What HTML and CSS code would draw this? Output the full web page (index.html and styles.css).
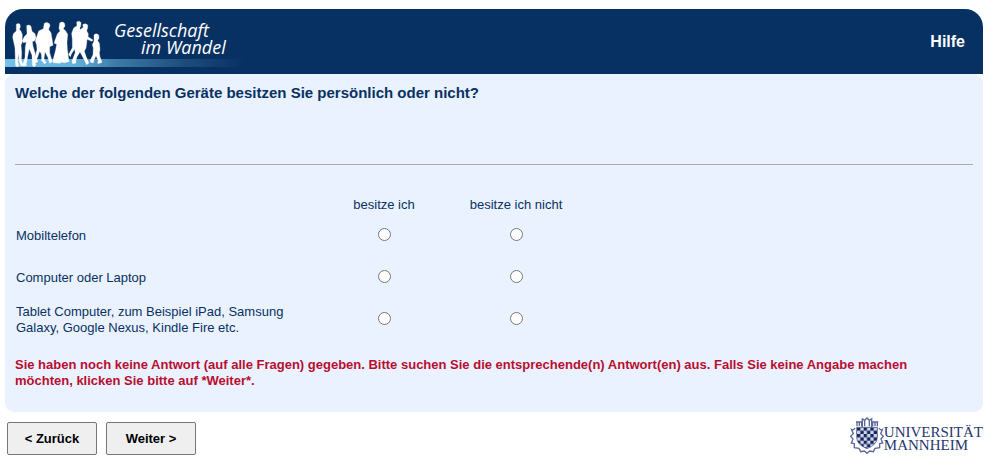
FILE: index.html
```html
<!DOCTYPE html>
<html lang="de">
<head>
<meta charset="utf-8">
<meta name="viewport" content="width=device-width, initial-scale=1">
<title>Gesellschaft im Wandel</title>
<link rel="stylesheet" href="styles.css">
</head>
<body>
<form class="survey">
  <header class="banner">
    <div class="brand">
      <svg class="people" viewBox="15 57 300 144" aria-hidden="true">
        <g fill="#fff" stroke="#fff" stroke-width="1">
          <path d="M49 73q5-5 11 0l1 8-3 7 5 6 4 10-1 26-3 4 2 24-1 22 6 15-7 3-6-15-2-22-2 23 4 13-5 4-5-4-1-17-1-36-3-14-4-18 2-11 9-8z"/>
          <path d="M80 77q7-5 13 2l2 11 2 5 8 6 3 13-4 8-7 3 2 14 6 20-1 24 4 13-7 5-4-7-1-28-8-20-5 23-4 22 1 5-9 3-3-3 7-24 1-32 3-14-9 2-4-6 8-13 7-7z"/>
          <path d="M130 70q7-5 15 1l2 6-3 7-1 5 7 9 4 24 2 14-10 4 0 18 8 27-8 5-6-19-8-16-3 22 7 11-6 3-8-9-1-20-5-8-8 23 2 9-8 2-4-8 10-30-1-15-4-12 4-12 6-18 14-7z" transform="translate(3 0)"/>
          <path d="M179 69q8-6 14 0l2 9-5 8 7 7 6 10-2 24 1 20 5 38-14 3-8-1-6 3-18-2-3-4 9-34 3-17-7-3 1-6 8-22 8-9-3-8z"/>
          <path d="M230 66q9-6 13 2l-1 11-3 6 5 9 0 27 1 23-12 18-7 19 2 8-10 2-2-5 10-28-2-10-10 14-2 8-6-5 1-4 10-18 0-25-2-18 6-16 10-7z"/>
          <path d="M248 74q8-6 15 1l0 9-3 8 5 10-1 8 15 10-3 4-15-6-1 12-2 14-5 9 5 16 9 20-8 5-3-8-11-21-5-9-9 14-6 18-9-4 11-28 7-19 1-29 7-20 8-6z"/>
          <path d="M282 105q6-7 14 0l1 9-4 8 5 7 2 20-2 9 2 13 6 16-12 4-1-5 2-3-7-15-6 12-2 9-9-3 0-5 8-17 1-20-3-10 5-11z"/>
        </g>
      </svg>
      <p class="title"><span>Gesellschaft</span><span class="title-second">im Wandel</span></p>
    </div>
    <a class="help" href="#hilfe">Hilfe</a>
  </header>

  <main class="panel">
    <h1 class="question">Welche der folgenden Geräte besitzen Sie persönlich oder nicht?</h1>
    <table class="matrix">
      <thead>
        <tr><td></td><th scope="col">besitze ich</th><th scope="col">besitze ich nicht</th></tr>
      </thead>
      <tbody>
        <tr>
          <th scope="row">Mobiltelefon</th>
          <td><input type="radio" name="mobil" aria-label="Mobiltelefon: besitze ich"></td>
          <td><input type="radio" name="mobil" aria-label="Mobiltelefon: besitze ich nicht"></td>
        </tr>
        <tr>
          <th scope="row">Computer oder Laptop</th>
          <td><input type="radio" name="computer" aria-label="Computer oder Laptop: besitze ich"></td>
          <td><input type="radio" name="computer" aria-label="Computer oder Laptop: besitze ich nicht"></td>
        </tr>
        <tr>
          <th scope="row">Tablet Computer, zum Beispiel iPad, Samsung Galaxy, Google Nexus, Kindle Fire etc.</th>
          <td><input type="radio" name="tablet" aria-label="Tablet Computer: besitze ich"></td>
          <td><input type="radio" name="tablet" aria-label="Tablet Computer: besitze ich nicht"></td>
        </tr>
      </tbody>
    </table>
    <p class="warning">Sie haben noch keine Antwort (auf alle Fragen) gegeben. Bitte suchen Sie die entsprechende(n) Antwort(en) aus. Falls Sie keine Angabe machen möchten, klicken Sie bitte auf *Weiter*.</p>
  </main>

  <footer class="footer">
    <div class="actions">
      <button type="button">&lt; Zurück</button>
      <button type="button">Weiter &gt;</button>
    </div>
    <div class="university">
      <svg class="crest" viewBox="36 36 102 111" aria-hidden="true">
        <defs>
          <pattern id="checks" x="57" y="67" width="20" height="20" patternUnits="userSpaceOnUse">
            <rect width="20" height="20" fill="#d3d8e8"/>
            <path d="M0 0h10v10H0zM10 10h10v10H10z" fill="#14245f"/>
          </pattern>
        </defs>
        <g fill="none" stroke="#5a679c" stroke-width="4">
          <path d="M57 64V51h14v13M104 64V51h14v13M73 66V42l7 4 7-7 7 7 7-4v24M80 47v17M94 47v17M54 51h20M101 51h20M64 53v10M111 53v10"/>
          <path d="M51 69q-5 8-10 5l5 12-8 8 7 8-5 12 9 2 0 12 14 2 5 10 11-2 8 7 8-7 11 2 5-10 14-2 0-12 9-2-5-12 7-8-8-8 5-12q-5 3-10-5"/>
        </g>
        <path d="M56 67h62v30q0 22-31 34-31-12-31-34z" fill="url(#checks)" stroke="#3b4a83" stroke-width="2"/>
      </svg>
      <p class="university-name"><span>UNIVERSITÄT</span><span>MANNHEIM</span></p>
    </div>
  </footer>
</form>
</body>
</html>
```
FILE: styles.css
```css
* { box-sizing: border-box; }

body {
  margin: 0;
  background: #fff;
  color: #083163;
  font: 13px/16px "Liberation Sans", Arial, sans-serif;
}

h1, p { margin: 0; }

.survey { padding: 9px 15px 0 5px; }

.banner {
  display: flex;
  justify-content: space-between;
  align-items: center;
  height: 65px;
  padding-right: 18px;
  border-radius: 18px 18px 0 0;
  background: #083163;
  overflow: hidden;
}

.brand {
  display: flex;
  align-self: stretch;
  width: 250px;
  padding-top: 10px;
  background: linear-gradient(90deg, #75c0e8 0, #65b0da 70px, #3d7ba8 110px, #1d4c7c 180px, #083163 240px) 0 50px / 100% 8px no-repeat;
}

.people {
  flex: none;
  width: 100px;
  height: 48px;
}

.title {
  padding: 3px 0 0 9px;
  color: #fff;
  font: italic 18px/17px "Open Sans", "Noto Sans", sans-serif;
  white-space: nowrap;
}

.title span { display: block; }

.title .title-second { padding-left: 27px; }

.help {
  color: #fff;
  font-size: 16px;
  font-weight: bold;
  text-decoration: none;
}

.panel {
  padding: 10px;
  border-radius: 9px;
  background: #eaf2ff;
}

.question {
  min-height: 81px;
  border-bottom: 1px solid #aaa;
  font-size: 15px;
  line-height: 18px;
}

.matrix {
  margin: 32px 0 16px;
  border-collapse: collapse;
}

.matrix th, .matrix td {
  width: 132px;
  padding: 0 1px;
  font-weight: normal;
  text-align: center;
}

.matrix thead th {
  height: 18px;
  vertical-align: top;
}

.matrix tbody tr { height: 42px; }

.matrix tbody th {
  width: 303px;
  padding-right: 20px;
  text-align: left;
}

.matrix input {
  display: block;
  width: 13px;
  height: 13px;
  margin: 0 auto 4px;
}

.warning {
  padding: 0 24px 13px 0;
  color: #b90d30;
  font-weight: bold;
}

.footer {
  display: flex;
  justify-content: space-between;
  align-items: flex-start;
  padding: 5px 0 0 2px;
}

.actions {
  display: flex;
  gap: 9px;
  padding-top: 5px;
}

.actions button {
  width: 90px;
  height: 33px;
  padding: 0;
  border: 1px solid #767676;
  border-radius: 2px;
  background: #efefef;
  color: #000;
  font: bold 13px/16px "Liberation Sans", Arial, sans-serif;
}

.university {
  display: flex;
  color: #26366f;
}

.crest {
  width: 34px;
  height: 37px;
}

.university-name {
  padding-top: 9px;
  font: 15px/13px "Liberation Serif", "Times New Roman", serif;
}

.university-name span { display: block; }
```
